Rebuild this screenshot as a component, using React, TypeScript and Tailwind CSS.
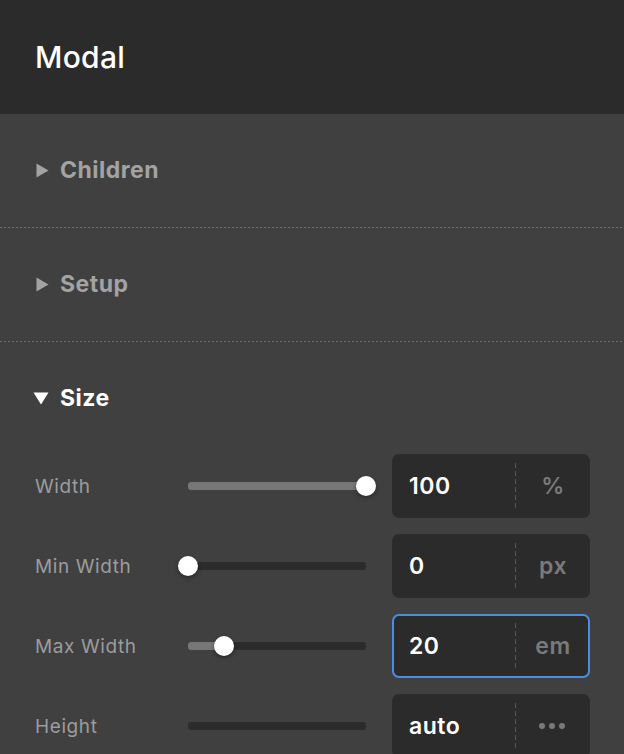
const font = { fontFamily: 'Inter, "Noto Sans", sans-serif' }

function Caret({ open }: { open?: boolean }) {
  if (open) {
    return (
      <svg width="16" height="13" viewBox="0 0 16 13" className="shrink-0">
        <path d="M0.5 0.5h15L8 12.5z" fill="#ffffff" />
      </svg>
    )
  }
  return (
    <svg width="13" height="15" viewBox="0 0 13 15" className="shrink-0">
      <path d="M0.5 0.5l12 7L0.5 14.5z" fill="#a3a3a3" />
    </svg>
  )
}

function Dotted() {
  return (
    <div className="h-px w-full shrink-0 bg-[linear-gradient(to_right,#6b6b6b_50%,transparent_50%)] bg-[length:4px_1px]" />
  )
}

function Section({ title }: { title: string }) {
  return (
    <>
      <div className="flex h-[113px] shrink-0 items-center gap-[11px] pl-[36px]">
        <Caret />
        <span className="text-[23px] font-bold tracking-[0.5px] text-[#a3a3a3]">{title}</span>
      </div>
      <Dotted />
    </>
  )
}

type Row = {
  label: string
  value: string
  unit: string
  fill: number
  thumb: boolean
  active?: boolean
}

const rows: Row[] = [
  { label: 'Width', value: '100', unit: '%', fill: 100, thumb: true },
  { label: 'Min Width', value: '0', unit: 'px', fill: 0, thumb: true },
  { label: 'Max Width', value: '20', unit: 'em', fill: 20, thumb: true, active: true },
  { label: 'Height', value: 'auto', unit: 'more', fill: 0, thumb: false },
]

function Slider({ fill, thumb }: { fill: number; thumb: boolean }) {
  return (
    <div className="relative h-[8px] w-[178px] rounded-[3px] bg-[#2b2b2b]">
      <div
        className="h-full rounded-[3px] bg-[#777777]"
        style={{ width: `${fill}%` }}
      />
      {thumb && (
        <div
          className="absolute top-1/2 h-[20px] w-[20px] -translate-x-1/2 -translate-y-1/2 rounded-full bg-white shadow-[0_2px_4px_rgba(0,0,0,0.35)]"
          style={{ left: `${fill}%` }}
        />
      )}
    </div>
  )
}

function Field({ value, unit, active }: { value: string; unit: string; active?: boolean }) {
  return (
    <div
      className={`flex h-[64px] w-[198px] items-center rounded-[7px] bg-[#2b2b2b] ${
        active ? 'border-2 border-[#4a8ee0]' : 'border-2 border-transparent'
      }`}
    >
      <span className="flex-1 pl-[15px] text-[23px] font-semibold tracking-[0.5px] text-white">{value}</span>
      <div className="h-[46px] w-px bg-[linear-gradient(to_bottom,#555555_60%,transparent_60%)] bg-[length:1px_8px]" />
      {unit === 'more' ? (
        <div className="flex w-[72px] items-center justify-center gap-[4px]">
          <span className="h-[6px] w-[6px] rounded-full bg-[#7a7a7a]" />
          <span className="h-[6px] w-[6px] rounded-full bg-[#7a7a7a]" />
          <span className="h-[6px] w-[6px] rounded-full bg-[#7a7a7a]" />
        </div>
      ) : (
        <span className="w-[72px] pl-[2px] text-center text-[23px] font-semibold tracking-[0.5px] text-[#7a7a7a]">
          {unit}
        </span>
      )}
    </div>
  )
}

export default function App() {
  return (
    <div className="flex h-[754px] w-[624px] flex-col overflow-hidden bg-[#404040]" style={font}>
      <div className="flex h-[114px] shrink-0 items-center bg-[#2b2b2b] pl-[35px]">
        <h1 className="text-[30px] font-medium tracking-[0.3px] text-white">Modal</h1>
      </div>
      <Section title="Children" />
      <Section title="Setup" />
      <div className="flex h-[112px] shrink-0 items-center gap-[11px] pl-[33px]">
        <Caret open />
        <span className="text-[23px] font-bold tracking-[0.5px] text-white">Size</span>
      </div>
      <div className="flex flex-col gap-[16px]">
        {rows.map(r => (
          <div key={r.label} className="flex items-center pl-[35px]">
            <span className="w-[153px] pt-[2px] text-[19px] tracking-[0.6px] text-[#9c9c9c]">{r.label}</span>
            <Slider fill={r.fill} thumb={r.thumb} />
            <div className="ml-[26px]">
              <Field value={r.value} unit={r.unit} active={r.active} />
            </div>
          </div>
        ))}
      </div>
    </div>
  )
}
